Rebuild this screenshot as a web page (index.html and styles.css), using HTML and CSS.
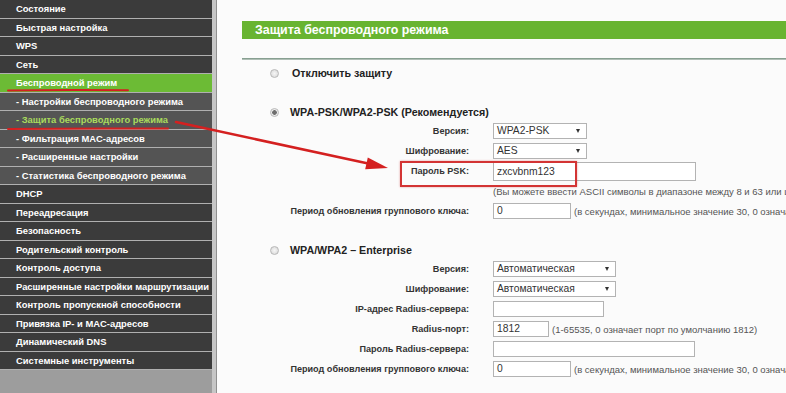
FILE: index.html
```html
<!DOCTYPE html>
<html lang="ru">
<head>
<meta charset="utf-8">
<title>Защита беспроводного режима</title>
<link rel="stylesheet" href="styles.css">
</head>
<body>
<div class="page">
  <nav class="sidebar">
    <div class="item">Состояние</div>
    <div class="item">Быстрая настройка</div>
    <div class="item">WPS</div>
    <div class="item">Сеть</div>
    <div class="item active">Беспроводной режим</div>
    <div class="item sub">- Настройки беспроводного режима</div>
    <div class="item sub current">- Защита беспроводного режима</div>
    <div class="item sub">- Фильтрация MAC-адресов</div>
    <div class="item sub">- Расширенные настройки</div>
    <div class="item sub">- Статистика беспроводного режима</div>
    <div class="item">DHCP</div>
    <div class="item">Переадресация</div>
    <div class="item">Безопасность</div>
    <div class="item">Родительский контроль</div>
    <div class="item">Контроль доступа</div>
    <div class="item">Расширенные настройки маршрутизации</div>
    <div class="item">Контроль пропускной способности</div>
    <div class="item">Привязка IP- и MAC-адресов</div>
    <div class="item">Динамический DNS</div>
    <div class="item">Системные инструменты</div>
  </nav>
  <main class="main">
    <div class="title">Защита беспроводного режима</div>
    <div class="rule"></div>

    <div class="radio-row first"><span class="radio"></span><span>Отключить защиту</span></div>

    <div class="radio-row psk"><span class="radio on"></span><span>WPA-PSK/WPA2-PSK (Рекомендуется)</span></div>
    <div class="form">
      <div class="label">Версия:</div>
      <div class="field"><div class="box select w94">WPA2-PSK</div></div>
      <div class="label">Шифрование:</div>
      <div class="field"><div class="box select w94">AES</div></div>
      <div class="label">Пароль PSK:</div>
      <div class="field"><div class="box tall w203">zxcvbnm123</div></div>
      <div class="label"></div>
      <div class="field hint">(Вы можете ввести ASCII символы в диапазоне между 8 и 63 или шестнадцатеричные символы в диапазоне между 8 и 64.)</div>
      <div class="label">Период обновления группового ключа:</div>
      <div class="field"><div class="box w78">0</div><span class="hint">(в секундах, минимальное значение 30, 0 означает отсутствие обновления)</span></div>
    </div>

    <div class="radio-row ent"><span class="radio"></span><span>WPA/WPA2 – Enterprise</span></div>
    <div class="form">
      <div class="label">Версия:</div>
      <div class="field"><div class="box select w123">Автоматическая</div></div>
      <div class="label">Шифрование:</div>
      <div class="field"><div class="box select w123">Автоматическая</div></div>
      <div class="label">IP-адрес Radius-сервера:</div>
      <div class="field"><div class="box w111"></div></div>
      <div class="label">Radius-порт:</div>
      <div class="field"><div class="box w56">1812</div><span class="hint">(1-65535, 0 означает порт по умолчанию 1812)</span></div>
      <div class="label">Пароль Radius-сервера:</div>
      <div class="field"><div class="box w202"></div></div>
      <div class="label">Период обновления группового ключа:</div>
      <div class="field"><div class="box w78">0</div><span class="hint">(в секундах, минимальное значение 30, 0 означает отсутствие обновления)</span></div>
    </div>
  </main>
</div>

<div class="highlight"></div>
<svg class="marks" width="786" height="393" viewBox="0 0 786 393">
  <path d="M8 90.5 Q60 89.5 128 90.2" stroke="#d42020" stroke-width="2" fill="none" stroke-linecap="round"/>
  <path d="M8 129 Q80 128 168 128.6" stroke="#d42020" stroke-width="2" fill="none" stroke-linecap="round"/>
  <path d="M176 122 L367 163.3" stroke="#d42020" stroke-width="2.5" fill="none" stroke-linecap="round"/>
  <polygon points="388,168 367.8,157.4 365.2,169.2" fill="#d42020"/>
</svg>
</body>
</html>
```

FILE: styles.css
```css
html, body {
  margin: 0;
  padding: 0;
}
body {
  width: 786px;
  height: 393px;
  overflow: hidden;
  position: relative;
  background: #fbfbfb;
  font-family: "Liberation Sans", Arial, sans-serif;
}
.page {
  display: flex;
  height: 393px;
}
.sidebar {
  width: 212px;
  flex: none;
  background: #9d9d9d;
  border-right: 4px solid #c6c6c6;
  box-shadow: 1px 0 0 #8f8f8f;
}
.item {
  height: 17.5px;
  line-height: 17.5px;
  border-bottom: 1px solid #b0b0b0;
  background: #3b3b3b;
  color: #fff;
  font-size: 9.4px;
  font-weight: bold;
  padding-left: 16px;
  white-space: nowrap;
  overflow: hidden;
}
.item.sub {
  background: #545454;
}
.item.active {
  background: #6cbb35;
}
.item.current {
  color: #a9db5c;
}
.main {
  flex: 1;
  min-width: 0;
  overflow: hidden;
  padding-left: 26px;
  padding-top: 21px;
}
.title {
  height: 18px;
  line-height: 18px;
  background: #68b431;
  color: #fff;
  font-size: 12.4px;
  font-weight: bold;
  padding-left: 13px;
  white-space: nowrap;
}
.rule {
  margin-top: 19px;
  height: 2px;
  background: linear-gradient(#74907f, #c2cec7);
}
.radio-row {
  height: 18px;
  display: flex;
  align-items: center;
  gap: 11px;
  padding-left: 28px;
  font-size: 10.7px;
  font-weight: bold;
  color: #222;
  white-space: nowrap;
}
.radio-row.first { margin-top: 4px; gap: 13px; }
.radio-row.psk { margin-top: 21px; }
.radio-row.ent { margin-top: 20px; }
.radio {
  width: 9px;
  height: 9px;
  box-sizing: border-box;
  border-radius: 50%;
  border: 1px solid #b8b8b8;
  background: radial-gradient(circle, #f6f6f6, #d6d6d6);
  flex: none;
}
.radio.on {
  background: radial-gradient(circle, #6e6e6e 0 2px, #ececec 2.6px);
}
.form {
  display: grid;
  grid-template-columns: 227px minmax(0, 1fr);
  column-gap: 24px;
  grid-auto-rows: 20px;
  align-items: center;
}
.label {
  text-align: right;
  font-size: 9.1px;
  font-weight: bold;
  color: #333;
  white-space: nowrap;
}
.field {
  display: flex;
  align-items: center;
  gap: 3px;
  white-space: nowrap;
  min-width: 0;
}
.hint {
  font-size: 9.5px;
  color: #555;
  white-space: nowrap;
}
.box {
  flex: none;
  height: 16px;
  box-sizing: border-box;
  border: 1px solid #b3b3b3;
  background: #fff;
  font-size: 10.3px;
  color: #333;
  line-height: 14px;
  padding-left: 3px;
  position: relative;
}
.box.tall {
  height: 19px;
  line-height: 17px;
}
.select::after {
  content: "";
  position: absolute;
  right: 6px;
  top: 5px;
  border-left: 2.5px solid transparent;
  border-right: 2.5px solid transparent;
  border-top: 4px solid #333;
}
.w56 { width: 56px; }
.w78 { width: 78px; }
.w94 { width: 94px; }
.w111 { width: 111px; }
.w123 { width: 123px; }
.w202 { width: 202px; }
.w203 { width: 203px; }
.highlight {
  position: absolute;
  left: 400px;
  top: 161px;
  width: 177px;
  height: 26px;
  box-sizing: border-box;
  border: 2px solid #d33434;
  box-shadow: 0 0 2px rgba(200, 30, 30, 0.4);
  pointer-events: none;
}
.marks {
  position: absolute;
  left: 0;
  top: 0;
  pointer-events: none;
}
```
